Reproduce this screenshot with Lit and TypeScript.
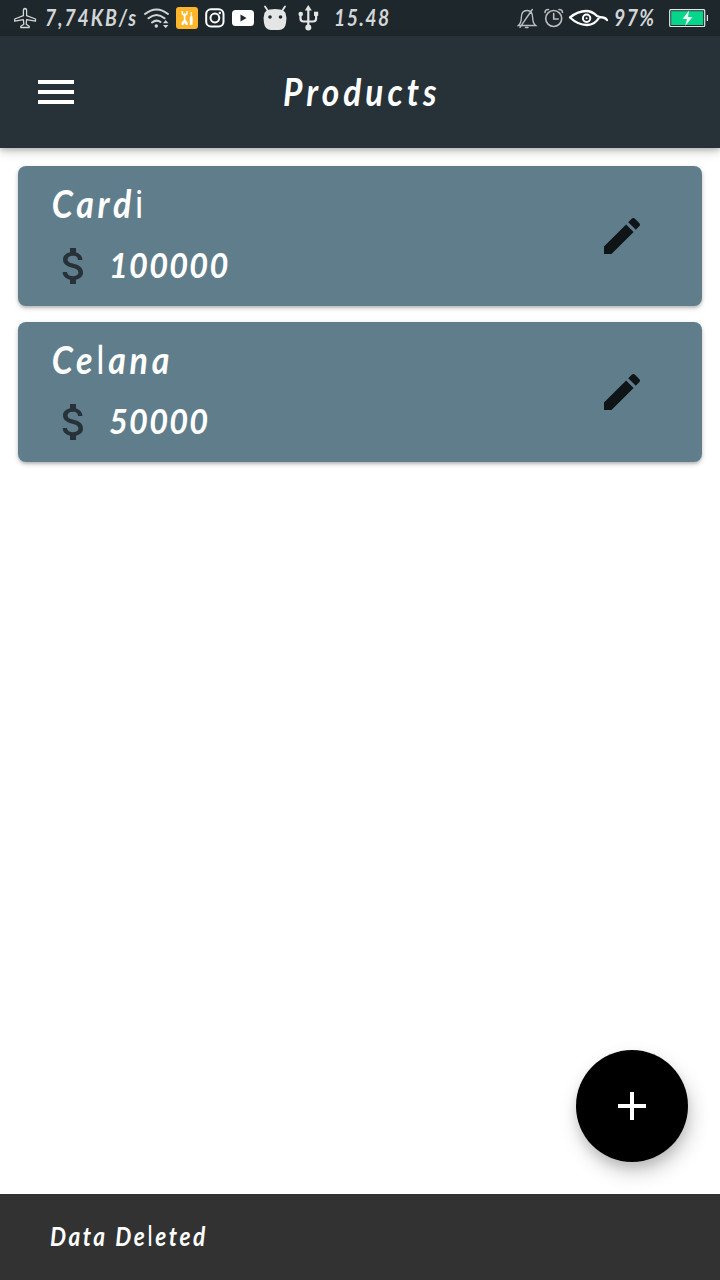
import { LitElement, html, css } from "lit";
import { customElement, property } from "lit/decorators.js";

const MENU = "M3 18h18v-2H3v2zm0-5h18v-2H3v2zm0-7v2h18V6H3z";
const MONEY =
  "M11.8 10.9c-2.27-.59-3-1.2-3-2.15 0-1.09 1.01-1.85 2.7-1.85 1.78 0 2.44.85 2.5 2.1h2.21c-.07-1.72-1.12-3.3-3.21-3.81V3h-3v2.16c-1.94.42-3.5 1.68-3.5 3.61 0 2.31 1.91 3.46 4.7 4.13 2.5.6 3 1.48 3 2.41 0 .69-.49 1.79-2.7 1.79-2.06 0-2.87-.92-2.98-2.1h-2.2c.12 2.19 1.76 3.42 3.68 3.83V21h3v-2.15c1.95-.37 3.5-1.5 3.5-3.55 0-2.84-2.43-3.81-4.7-4.4z";
const EDIT =
  "M3 17.25V21h3.75L17.81 9.94l-3.75-3.75L3 17.25zM20.71 7.04c.39-.39.39-1.02 0-1.41l-2.34-2.34c-.39-.39-1.02-.39-1.41 0l-1.83 1.83 3.75 3.75 1.83-1.83z";
const ADD = "M19 13h-6v6h-2v-6H5v-2h6V5h2v6h6v2z";

const icon = (d: string) =>
  html`<svg class="icon" width="48" height="48" viewBox="0 0 24 24" fill="currentColor"><path d=${d}></path></svg>`;

@customElement("status-bar")
class StatusBar extends LitElement {
  static styles = css`
    :host {
      display: block;
      height: 36px;
      background: #1e272c;
      color: #d3d6d7;
      font: italic 700 22px/35px "Lato", sans-serif;
    }
    .bar {
      display: grid;
      grid-template-columns: 45px 99px 32px 28px 27px 30px 37px 36px 183px 27px 24px 46px 55px 51px;
      height: 36px;
    }
    .cell { min-width: 0; white-space: nowrap; }
    .net { letter-spacing: 2.1px; }
    .clock { letter-spacing: 1.6px; }
    .scale { display: inline-block; transform: scaleX(0.88); transform-origin: left; }
    .pct { letter-spacing: 1.6px; }
    svg { display: block; }
  `;
  render() {
    return html`<div class="bar">
      <svg width="45" height="36" fill="none" stroke="#d3d6d7" stroke-width="1.3" stroke-linejoin="round">
        <path d="M25 8.5c-1 0-1.6 1-1.6 2.2v5L14.7 19v2.2l8.7-1.6.4 4.6-3 2v1.3h8.4v-1.3l-3-2 .4-4.6 8.9 1.6V19l-8.9-3.3v-5c0-1.2-.6-2.2-1.6-2.2z"/>
      </svg>
      <div class="cell"><span class="scale net">7,74KB/s</span></div>
      <svg width="32" height="36" fill="none" stroke="#d3d6d7" stroke-width="2" stroke-linecap="round">
        <path d="M1 14q11.500-9 23 0M4.500 18.300q8-6.500 16 0M8 22.500q4.500-3.500 8.500-.5"/>
        <circle cx="12.300" cy="26" r="1.700" fill="#d3d6d7" stroke="none"/>
        <path d="M19 23.300l2.700-3.300 2.700 3.300zM19 25l2.700 3.300 2.700-3.300z" fill="#d3d6d7" stroke="none"/>
      </svg>
      <svg width="28" height="36">
        <rect y="7" width="22" height="22" rx="3" fill="#fdb62b"/>
        <path d="M5.500 11v3l2.300 2v4l-2.300 2.500V25h1.800l1.300-2 1.300 2h1.800v-2.500L9.500 20v-4l2.200-2v-3h-1.400v2.500H7V11z" fill="#fff"/>
        <path d="M14.700 12h1v4.500h.9V25h-2.800v-8.500h.9z" fill="#fff"/>
      </svg>
      <svg width="27" height="36" fill="none" stroke="#fff" stroke-width="2">
        <rect x="2.200" y="9.200" width="17.300" height="17.300" rx="4.800"/>
        <circle cx="10.900" cy="18" r="4.400"/>
        <circle cx="15.800" cy="13" r="1.200" fill="#fff" stroke="none"/>
      </svg>
      <svg width="30" height="36">
        <rect x="1" y="10" width="22" height="16" rx="3.500" fill="#fff"/>
        <path d="M9.500 14.500v7l6-3.500z" fill="#1e272c"/>
      </svg>
      <svg width="37" height="36">
        <path d="M4 6.500l3 4.500M24 6.500l-3 4.500" stroke="#e4e5e5" stroke-width="1.800" stroke-linecap="round"/>
        <path d="M3.500 13q1.500-3 5.500-3.500 5-1 10 0 4 .5 5.500 3.500 1.500 4 .5 10-1 7-7 7h-8q-6 0-7-7-1-6 .5-10z" fill="#e4e5e5"/>
        <circle cx="9" cy="17" r="1.800" fill="#1e272c"/><circle cx="19.500" cy="17" r="1.800" fill="#1e272c"/>
      </svg>
      <svg width="36" height="36" fill="none" stroke="#e4e5e5" stroke-width="2.200">
        <path d="M10.300 8v20M2.500 14v4.500q0 3 3 3h9.600q3 0 3-3V14"/>
        <path d="M6.800 10.500l3.500-5.500 3.500 5.500z" fill="#e4e5e5" stroke="none"/>
        <circle cx="2.700" cy="14" r="2.300" fill="#e4e5e5" stroke="none"/>
        <rect x="16" y="11.700" width="4.200" height="4.200" fill="#e4e5e5" stroke="none"/>
        <circle cx="10.300" cy="27.600" r="3" fill="#e4e5e5" stroke="none"/>
      </svg>
      <div class="cell"><span class="scale clock">15.48</span></div>
      <svg width="27" height="36" fill="none" stroke="#b9bec0" stroke-width="1.400" stroke-linecap="round">
        <path d="M1.300 25.500q3-2.500 3-7.500 0-7.500 5.700-7.500t5.700 7.500q0 5 3 7.500zM15.300 9.500L3 27.300M8.500 27.500h2.500"/>
      </svg>
      <svg width="24" height="36" fill="none" stroke="#b9bec0" stroke-width="1.600" stroke-linecap="round">
        <circle cx="9.700" cy="18.500" r="8"/>
        <path d="M9.700 13.500v5.500h4.500M1 12.500q0-3 3.500-3M18.500 12.500q0-3-3.500-3"/>
      </svg>
      <svg width="46" height="36" fill="none" stroke="#fff" stroke-width="2.300" stroke-linecap="round">
        <path d="M2 17.500q8-6.500 16-6.500 6 0 11 5 3 1.500 6 1.500 3 .500 4 2.500M2 17.500q8 7.500 17 7.500 8 0 12.500-8"/>
        <circle cx="18.600" cy="18.200" r="3.700" stroke-width="2"/>
        <circle cx="18.600" cy="18.200" r="1" fill="#fff" stroke="none"/>
      </svg>
      <div class="cell"><span class="scale pct">97%</span></div>
      <svg width="51" height="36">
        <rect x=".7" y="9.700" width="35" height="16.800" rx="1" fill="none" stroke="#dfe9e8" stroke-width="1.200"/>
        <rect x="2.200" y="11.200" width="32" height="13.800" fill="#06d58c"/>
        <path d="M37.800 15h1.200v6h-1.200z" fill="#dfe9e8"/>
        <path d="M20 10.500l-6.500 8.500h4.500l-1.800 7 7.300-9h-4.500z" fill="#e8fff6"/>
      </svg>
    </div>`;
  }
}

@customElement("product-card")
class ProductCard extends LitElement {
  @property({ attribute: false }) name: unknown = "";
  @property() price = "";
  static styles = css`
    :host {
      display: flex;
      justify-content: space-between;
      box-sizing: border-box;
      height: 140px;
      padding: 0 56px 0 32px;
      border-radius: 8px;
      background: #607d8b;
      color: #fff;
      box-shadow: 0 2px 2px rgba(0, 0, 0, 0.1), 0 2px 5px rgba(0, 0, 0, 0.22);
    }
    .info { display: flex; flex-direction: column; }
    .name {
      height: 76px;
      font: italic 700 39px/74px "Lato", sans-serif;
      letter-spacing: 4.3px;
      white-space: nowrap;
      transform: scaleX(0.87);
      transform-origin: left;
      padding-left: 2px;
    }
    .thin { font-style: normal; font-weight: 400; font-family: "Roboto", sans-serif; }
    .row { display: flex; align-items: center; height: 48px; gap: 11px; }
    .money { color: #263238; height: 48px; }
    .price {
      font: italic 700 35px/44px "Lato", sans-serif;
      height: 48px;
      letter-spacing: 1.3px;
      transform: scaleX(0.93);
      transform-origin: left;
    }
    .edit { height: 48px; margin-top: 46px; color: #0f1417; }
    .icon { display: block; }
  `;
  render() {
    return html`<div class="info">
        <div class="name">${this.name}</div>
        <div class="row"><div class="money">${icon(MONEY)}</div><div class="price">${this.price}</div></div>
      </div>
      <div class="edit">${icon(EDIT)}</div>`;
  }
}

@customElement("app-root")
class AppRoot extends LitElement {
  static styles = css`
    :host {
      display: flex;
      flex-direction: column;
      position: relative;
      height: 1280px;
      background: #fff;
      overflow: hidden;
    }
    .appbar {
      display: grid;
      grid-template-columns: 80px 1fr 80px;
      align-items: center;
      height: 112px;
      flex: none;
      background: #263238;
      color: #fff;
      box-shadow: 0 2px 5px rgba(0, 0, 0, 0.18), 0 4px 10px rgba(0, 0, 0, 0.16);
    }
    .menu { padding-left: 32px; }
    .title {
      text-align: center;
      font: italic 700 38px/46px "Lato", sans-serif;
      height: 48px;
      letter-spacing: 4.6px;
      transform: scaleX(0.88);
      padding-left: 4px;
    }
    .icon { display: block; }
    .list {
      flex: 1;
      display: flex;
      flex-direction: column;
      gap: 16px;
      padding: 18px;
    }
    .thin { font-style: normal; font-weight: 400; font-family: "Roboto", sans-serif; }
    .snack {
      flex: none;
      height: 86px;
      box-sizing: border-box;
      padding-left: 50px;
      background: #323232;
      color: #fff;
      font: italic 700 27px/84px "Lato", sans-serif;
      letter-spacing: 3px;
    }
    .msg { display: inline-block; transform: scaleX(0.84); transform-origin: left; }
    .fab {
      position: absolute;
      right: 32px;
      bottom: 118px;
      width: 112px;
      height: 112px;
      border-radius: 50%;
      background: #000;
      color: #fff;
      display: grid;
      place-items: center;
      box-shadow: 0 6px 10px rgba(0, 0, 0, 0.1), 3px 10px 20px rgba(0, 0, 0, 0.2);
    }
  `;
  render() {
    return html`<status-bar></status-bar>
      <div class="appbar"><div class="menu">${icon(MENU)}</div><div class="title">Products</div></div>
      <div class="list">
        <product-card .name=${html`Card<span class="thin">i</span>`} price="100000"></product-card>
        <product-card .name=${html`Ce<span class="thin">l</span>ana`} price="50000"></product-card>
      </div>
      <div class="snack"><span class="msg">Data De<span class="thin">l</span>eted</span></div>
      <div class="fab">${icon(ADD)}</div>`;
  }
}
